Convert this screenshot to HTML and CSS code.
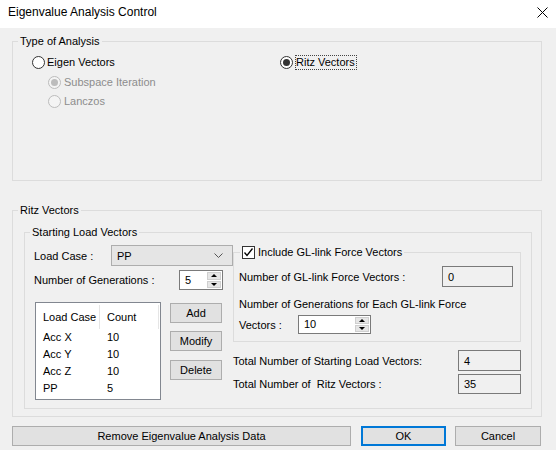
FILE: index.html
```html
<!DOCTYPE html>
<html>
<head>
<meta charset="utf-8">
<title>Eigenvalue Analysis Control</title>
<link rel="stylesheet" href="styles.css">
</head>
<body>
<div class="titlebar">
  <span class="title">Eigenvalue Analysis Control</span>
  <svg class="close" width="11" height="11" viewBox="0 0 11 11"><path d="M0.5 0.5L10.5 10.5M10.5 0.5L0.5 10.5" stroke="#000" stroke-width="1" fill="none"/></svg>
</div>
<div class="main">
  <fieldset class="group g-type">
    <legend>Type of Analysis</legend>
    <div class="type-body">
      <div class="col">
        <div class="radio"><span class="rb"></span><span>Eigen Vectors</span></div>
        <div class="suboptions">
          <div class="radio disabled"><span class="rb checked"></span><span>Subspace Iteration</span></div>
          <div class="radio disabled"><span class="rb"></span><span>Lanczos</span></div>
        </div>
      </div>
      <div class="col">
        <div class="radio"><span class="rb checked"></span><span class="focus">Ritz Vectors</span></div>
      </div>
    </div>
  </fieldset>

  <fieldset class="group g-ritz">
    <legend>Ritz Vectors</legend>
    <fieldset class="group g-start">
      <legend>Starting Load Vectors</legend>
      <div class="start-body">
        <div class="left">
          <div class="row r-loadcase">
            <span class="lbl lbl-lc">Load Case :</span>
            <div class="combo"><span>PP</span><svg width="9" height="5" viewBox="0 0 9 5"><path d="M0.5 0.5L4.5 4.5L8.5 0.5" fill="none" stroke="#555" stroke-width="1"/></svg></div>
          </div>
          <div class="row r-gen">
            <span class="lbl lbl-gen">Number of Generations :</span>
            <div class="spin spin-gen"><span class="val">5</span><div class="arrows"><span class="arr up"></span><span class="arr down"></span></div></div>
          </div>
          <div class="list-area">
            <div class="listbox">
              <div class="lb-head"><span class="c1">Load Case</span><span class="c2">Count</span></div>
              <div class="lb-row"><span class="c1">Acc X</span><span class="c2">10</span></div>
              <div class="lb-row"><span class="c1">Acc Y</span><span class="c2">10</span></div>
              <div class="lb-row"><span class="c1">Acc Z</span><span class="c2">10</span></div>
              <div class="lb-row"><span class="c1">PP</span><span class="c2">5</span></div>
            </div>
            <div class="btncol">
              <div class="btn">Add</div>
              <div class="btn">Modify</div>
              <div class="btn">Delete</div>
            </div>
          </div>
        </div>
        <div class="right">
          <fieldset class="group g-gl">
            <legend><span class="check"><span class="cb"><svg width="11" height="11" viewBox="0 0 11 11"><path d="M1.5 5.5L4 8.5L9.5 1.5" fill="none" stroke="#000" stroke-width="1.3"/></svg></span><span>Include GL-link Force Vectors</span></span></legend>
            <div class="gl-body">
              <div class="row gl-row"><span>Number of GL-link Force Vectors :</span><div class="field ro f-gl">0</div></div>
              <div class="gen-text">Number of Generations for Each GL-link Force</div>
              <div class="row vec-row"><span class="lbl-vec">Vectors :</span><div class="spin spin-vec"><span class="val">10</span><div class="arrows"><span class="arr up"></span><span class="arr down"></span></div></div></div>
            </div>
          </fieldset>
          <div class="row total t1"><span>Total Number of Starting Load Vectors:</span><div class="field ro f-tot">4</div></div>
          <div class="row total t2"><span>Total Number of &nbsp;Ritz Vectors :</span><div class="field ro f-tot">35</div></div>
        </div>
      </div>
    </fieldset>
  </fieldset>

  <div class="buttons">
    <div class="btn b-remove">Remove Eigenvalue Analysis Data</div>
    <div class="btn b-ok">OK</div>
    <div class="btn b-cancel">Cancel</div>
  </div>
</div>
</body>
</html>
```

FILE: styles.css
```css
html, body {
  margin: 0;
  padding: 0;
}
body {
  width: 556px;
  height: 450px;
  overflow: hidden;
  background: #f0f0f0;
  font-family: "Liberation Sans", Arial, sans-serif;
  font-size: 11px;
  line-height: 14px;
  color: #000;
}

.titlebar {
  height: 28px;
  box-sizing: border-box;
  background: #fff;
  display: flex;
  justify-content: space-between;
  align-items: flex-start;
  padding: 4px 8px 0 8px;
}
.title {
  font-size: 12px;
  line-height: 16px;
}
.close {
  margin-top: 3px;
}

.main {
  padding: 6px 14px 0 12px;
}

fieldset.group {
  margin: 0;
  padding: 0;
  border: 1px solid #dcdcdc;
  min-width: 0;
}
fieldset.group > legend {
  margin-left: 5px;
  padding: 0 2px;
  line-height: 14px;
}

/* Type of analysis */
.type-body {
  height: 132px;
  box-sizing: border-box;
  padding: 6px 0 0 19px;
  display: grid;
  grid-template-columns: 248px auto;
  align-items: start;
}
.radio {
  display: flex;
  align-items: center;
  gap: 2px;
  height: 16px;
}
.rb {
  width: 13px;
  height: 13px;
  box-sizing: border-box;
  border: 1px solid #333;
  border-radius: 50%;
  background: #fff;
  display: flex;
  align-items: center;
  justify-content: center;
  flex: none;
}
.rb.checked::after {
  content: "";
  width: 7px;
  height: 7px;
  border-radius: 50%;
  background: #333;
}
.radio.disabled {
  color: #8d8d8d;
  gap: 3px;
}
.radio.disabled .rb {
  border-color: #bcbcbc;
  background: #f4f4f4;
}
.radio.disabled .rb.checked::after {
  background: #bcbcbc;
}
.focus {
  border: 1px dotted #444;
  line-height: 13px;
  padding-right: 1px;
}
.suboptions {
  padding-left: 16px;
  margin-top: 4px;
  display: flex;
  flex-direction: column;
  gap: 3px;
}

/* Ritz vectors */
.g-ritz {
  margin-top: 22px !important;
  padding-bottom: 7px !important;
}
.g-start {
  margin: 8px 9px 0 11px !important;
}
.start-body {
  padding: 6px 10px 8px 9px;
  display: grid;
  grid-template-columns: 199px 288px;
  align-items: start;
}
.row {
  display: flex;
  align-items: center;
}
.r-loadcase {
  height: 21px;
}
.lbl-lc {
  width: 77px;
}
.combo {
  width: 122px;
  height: 21px;
  box-sizing: border-box;
  border: 1px solid #adadad;
  background: #e5e5e5;
  display: flex;
  align-items: center;
  justify-content: space-between;
  padding: 0 9px 0 5px;
}
.r-gen {
  margin-top: 4px;
  height: 20px;
}
.lbl-gen {
  width: 145px;
}
.spin {
  height: 20px;
  box-sizing: border-box;
  border: 1px solid #7a7a7a;
  background: #fff;
  display: flex;
  justify-content: space-between;
}
.spin .val {
  padding-left: 5px;
  line-height: 18px;
}
.spin-gen {
  width: 44px;
}
.arrows {
  width: 14px;
  display: flex;
  flex-direction: column;
  padding: 1px;
  gap: 1px;
  background: #fff;
}
.arr {
  flex: 1;
  background: #e6e6e6;
  border: 1px solid #cfcfcf;
  display: flex;
  align-items: center;
  justify-content: center;
}
.arr.up::after {
  content: "";
  border-left: 3px solid transparent;
  border-right: 3px solid transparent;
  border-bottom: 3px solid #000;
}
.arr.down::after {
  content: "";
  border-left: 3px solid transparent;
  border-right: 3px solid transparent;
  border-top: 3px solid #000;
}

.list-area {
  margin-top: 12px;
  display: flex;
  align-items: flex-start;
}
.listbox {
  margin-left: 1px;
  width: 126px;
  height: 98px;
  box-sizing: border-box;
  border: 1px solid #828790;
  background: #fff;
}
.lb-head {
  display: flex;
  height: 26px;
  align-items: center;
}
.lb-head span {
  border-right: 1px solid #e5e5e5;
  height: 24px;
  line-height: 24px;
  margin-top: 1px;
}
.c1 {
  width: 56px;
  padding-left: 7px;
}
.c2 {
  width: 51px;
  padding-left: 7px;
}
.lb-row {
  display: flex;
  height: 17px;
  line-height: 17px;
}
.lb-row .c1 {
  width: 57px;
}

.btncol {
  margin-left: 9px;
  margin-top: 1px;
  display: flex;
  flex-direction: column;
  gap: 8px;
}
.btn {
  height: 20px;
  box-sizing: border-box;
  border: 1px solid #adadad;
  background: #e1e1e1;
  display: flex;
  align-items: center;
  justify-content: center;
}
.btncol .btn {
  width: 52px;
}
.btncol .btn:last-child {
  margin-top: 1px;
}

.field {
  box-sizing: border-box;
  border: 1px solid #7a7a7a;
  padding-left: 5px;
  display: flex;
  align-items: center;
}
.field.ro {
  background: #f0f0f0;
}

.g-gl > legend {
  margin-left: 6px !important;
}
.check {
  display: flex;
  align-items: center;
  gap: 3px;
}
.cb {
  width: 13px;
  height: 13px;
  box-sizing: border-box;
  border: 1px solid #333;
  background: #fff;
  display: flex;
  align-items: center;
  justify-content: center;
}
.gl-body {
  padding: 7px 7px 7px 5px;
}
.gl-row {
  justify-content: space-between;
  height: 21px;
}
.f-gl {
  width: 71px;
  height: 21px;
}
.gen-text {
  margin-top: 10px;
}
.vec-row {
  margin-top: 4px;
  height: 19px;
}
.lbl-vec {
  width: 59px;
}
.spin-vec {
  width: 73px;
  height: 19px;
}
.spin-vec .val {
  line-height: 17px;
}
.total {
  justify-content: space-between;
}
.t1 {
  margin-top: 8px;
  height: 21px;
}
.t2 {
  margin-top: 3px;
  height: 20px;
}
.f-tot {
  width: 63px;
  height: 100%;
}

.buttons {
  display: flex;
  margin-top: 9px;
}
.b-remove {
  width: 339px;
}
.b-ok {
  width: 85px;
  margin-left: 10px;
  border: 2px solid #0078d7;
}
.b-cancel {
  width: 86px;
  margin-left: 9px;
}
```
